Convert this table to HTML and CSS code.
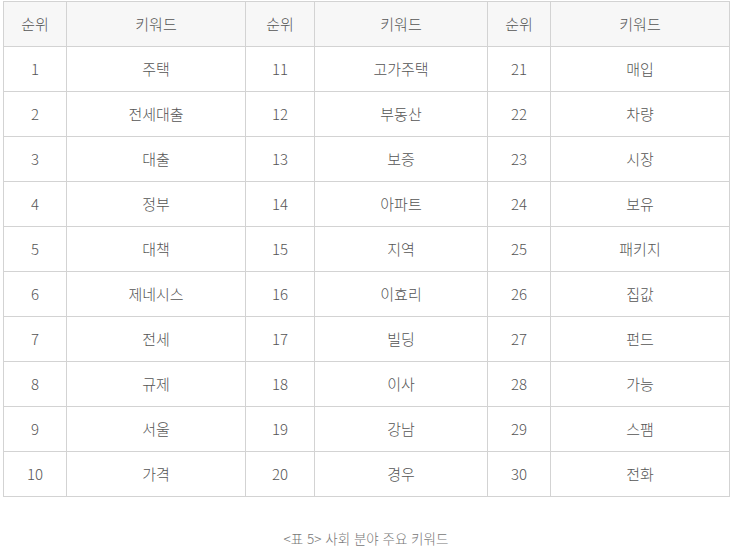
FILE: index.html
```html
<!DOCTYPE html>
<html lang="ko">
<head>
<meta charset="utf-8">
<link rel="stylesheet" href="styles.css">
</head>
<body>
<div class="wrap">
<table class="kw">
<colgroup>
<col class="c-rank"><col class="c-kw"><col class="c-rank2"><col class="c-kw2"><col class="c-rank"><col class="c-kw">
</colgroup>
<thead>
<tr><th>순위</th><th>키워드</th><th>순위</th><th>키워드</th><th>순위</th><th>키워드</th></tr>
</thead>
<tbody>
<tr><td>1</td><td>주택</td><td>11</td><td>고가주택</td><td>21</td><td>매입</td></tr>
<tr><td>2</td><td>전세대출</td><td>12</td><td>부동산</td><td>22</td><td>차량</td></tr>
<tr><td>3</td><td>대출</td><td>13</td><td>보증</td><td>23</td><td>시장</td></tr>
<tr><td>4</td><td>정부</td><td>14</td><td>아파트</td><td>24</td><td>보유</td></tr>
<tr><td>5</td><td>대책</td><td>15</td><td>지역</td><td>25</td><td>패키지</td></tr>
<tr><td>6</td><td>제네시스</td><td>16</td><td>이효리</td><td>26</td><td>집값</td></tr>
<tr><td>7</td><td>전세</td><td>17</td><td>빌딩</td><td>27</td><td>펀드</td></tr>
<tr><td>8</td><td>규제</td><td>18</td><td>이사</td><td>28</td><td>가능</td></tr>
<tr><td>9</td><td>서울</td><td>19</td><td>강남</td><td>29</td><td>스팸</td></tr>
<tr><td>10</td><td>가격</td><td>20</td><td>경우</td><td>30</td><td>전화</td></tr>
</tbody>
</table>
<p class="caption">&lt;표 5&gt; 사회 분야 주요 키워드</p>
</div>
</body>
</html>
```
FILE: styles.css
```css
html, body {
  margin: 0;
  padding: 0;
  background: #fff;
}
body {
  font-family: "Noto Sans CJK KR", "Noto Sans", sans-serif;
  color: #555;
}
.wrap {
  padding: 1px 4px 0 3px;
}
.kw {
  border-collapse: collapse;
  table-layout: fixed;
  width: 727px;
  font-size: 15px;
  font-weight: 300;
}
.c-rank { width: 63px; }
.c-kw { width: 179px; }
.c-rank2 { width: 69px; }
.c-kw2 { width: 173px; }
.kw th, .kw td {
  border: 1px solid #d3d3d3;
  text-align: center;
  vertical-align: middle;
  height: 44px;
  padding: 0;
  font-weight: 300;
  line-height: 20px;
}
.kw th {
  background: #f7f7f7;
}
.caption {
  margin: 31px 0 0;
  text-align: center;
  font-size: 13.5px;
  font-weight: 300;
  color: #777;
}
```
